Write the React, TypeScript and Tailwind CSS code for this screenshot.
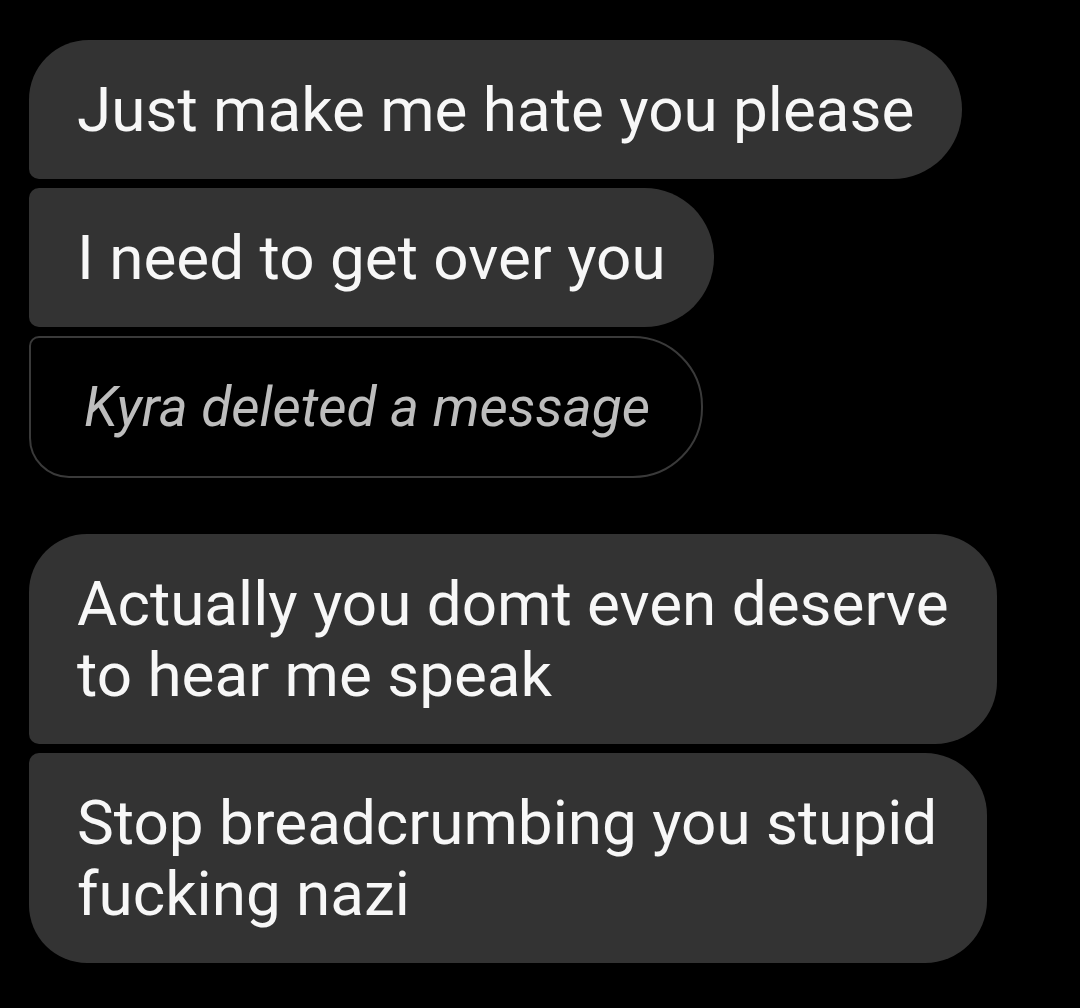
type Msg = {
  text: string;
  corners: string;
  width?: string;
};

const first: Msg[] = [
  { text: "Just make me hate you please", corners: "rounded-tl-[60px] rounded-bl-[10px] rounded-r-[70px]" },
  { text: "I need to get over you", corners: "rounded-l-[10px] rounded-r-[70px]" },
];

const second: Msg[] = [
  {
    text: "Actually you domt even deserve to hear me speak",
    corners: "rounded-tl-[58px] rounded-bl-[10px] rounded-r-[62px]",
    width: "w-[968px] pr-[40px]",
  },
  {
    text: "Stop breadcrumbing you stupid fucking nazi",
    corners: "rounded-tl-[10px] rounded-bl-[58px] rounded-r-[62px]",
    width: "w-[958px] pr-[40px]",
  },
];

function Bubble({ msg }: { msg: Msg }) {
  return (
    <div
      className={`${msg.width ?? "w-fit pr-[48px]"} bg-[#333333] pl-[48px] py-[34px] text-[62px] leading-[71px] text-[#f7f7f7] ${msg.corners}`}
    >
      {msg.text}
    </div>
  );
}

function App() {
  return (
    <div
      className="min-h-screen w-[1080px] h-[1008px] bg-black pl-[29px] pt-[40px]"
      style={{ fontFamily: "Roboto, 'Noto Sans', sans-serif" }}
    >
      <div className="flex flex-col gap-[9px]">
        {first.map((m) => (
          <Bubble key={m.text} msg={m} />
        ))}
        <div className="w-fit border-2 border-[#3a3a3a] rounded-tl-[10px] rounded-bl-[40px] rounded-r-[70px] pl-[53px] pr-[51px] py-[34px] text-[55px] leading-[70px] italic text-[#bdbdbd]">
          Kyra deleted a message
        </div>
      </div>
      <div className="mt-[56px] flex flex-col gap-[9px]">
        {second.map((m) => (
          <Bubble key={m.text} msg={m} />
        ))}
      </div>
    </div>
  );
}

export default App;
